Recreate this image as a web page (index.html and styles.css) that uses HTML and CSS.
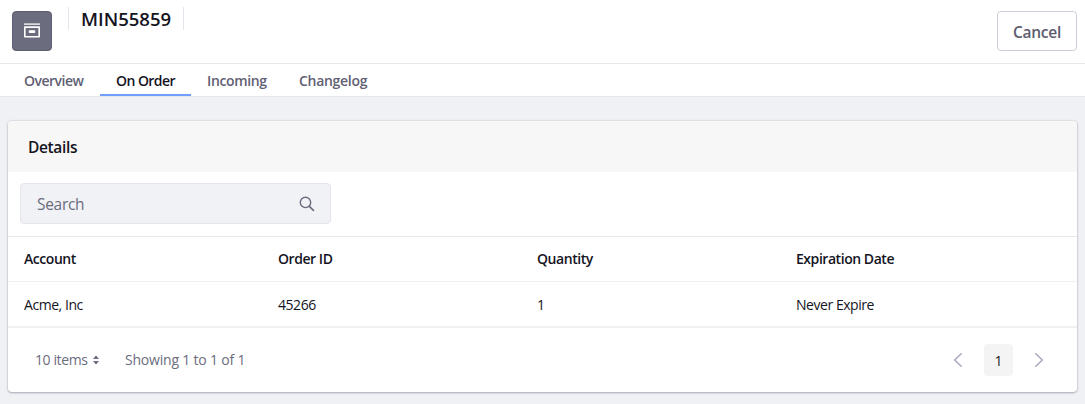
FILE: index.html
```html
<!DOCTYPE html>
<html lang="en">
<head>
<meta charset="utf-8">
<title>MIN55859</title>
<link rel="stylesheet" href="styles.css">
</head>
<body>
<header class="header">
  <div class="sticker">
    <svg width="18" height="16" viewBox="0 0 18 16"><path d="M1 1.1h16" stroke="#fff" stroke-width="1.3"/><path d="M1.8 4.1h14.4v9.7H1.8z" fill="none" stroke="#fff" stroke-width="1.6" stroke-linejoin="round"/><rect x="5.8" y="7.2" width="6.4" height="2.8" rx=".8" fill="#fff"/></svg>
  </div>
  <h1 class="title"><span>MIN55859</span></h1>
  <button class="cancel"><span>Cancel</span></button>
</header>
<nav class="tabs">
  <a class="tab tab-overview"><span>Overview</span></a>
  <a class="tab tab-order active"><span>On Order</span></a>
  <a class="tab tab-incoming"><span>Incoming</span></a>
  <a class="tab tab-changelog"><span>Changelog</span></a>
</nav>
<main class="card">
  <h2 class="card-title"><span>Details</span></h2>
  <div class="toolbar">
    <div class="search"><span>Search</span>
      <svg width="16" height="16" viewBox="0 0 16 16" fill="none" stroke="#6b6c7e" stroke-width="1.4"><circle cx="6.5" cy="6.4" r="5.2"/><path d="M10.2 10.1l4.7 4.7" stroke-width="1.7"/></svg>
    </div>
  </div>
  <div class="row row-head"><span><b>Account</b></span><span><b>Order ID</b></span><span><b>Quantity</b></span><span><b>Expiration Date</b></span></div>
  <div class="row row-body"><span>Acme, Inc</span><span>45266</span><span>1</span><span>Never Expire</span></div>
  <footer class="footer">
    <span class="page-size">10 items</span>
    <svg class="caret" width="6" height="10" viewBox="0 0 6 10" fill="#6b6c7e"><path d="M3 .6L6 4H0zM3 9.4L6 6H0z"/></svg>
    <span class="results">Showing 1 to 1 of 1</span>
    <div class="pager">
      <svg width="10" height="16" viewBox="0 0 10 16" fill="none" stroke="#a7a9bc" stroke-width="1.5"><path d="M8.7 1.2L1.7 8l7 6.8"/></svg>
      <span class="page">1</span>
      <svg width="10" height="16" viewBox="0 0 10 16" fill="none" stroke="#a7a9bc" stroke-width="1.5"><path d="M1.3 1.2l7 6.8-7 6.8"/></svg>
    </div>
  </footer>
</main>
</body>
</html>
```
FILE: styles.css
```css
* { box-sizing: border-box; }
body {
  margin: 0;
  height: 404px;
  overflow: hidden;
  background: #f0f1f5;
  color: #14141e;
  font: 14px/20px "Open Sans", "Noto Sans", sans-serif;
  white-space: nowrap;
}
.header {
  display: flex;
  align-items: flex-start;
  height: 64px;
  padding: 0 8px 0 12px;
  background: #fff;
  border-bottom: 1px solid #e7e7ed;
}
.sticker {
  display: flex;
  align-items: center;
  justify-content: center;
  width: 40px;
  height: 40px;
  margin-top: 11px;
  border: 1px solid #5d5e70;
  border-radius: 4px;
  background: #6b6c7e;
}
.title {
  width: 116px;
  height: 23px;
  margin: 7px 0 0 16px;
  padding: 0 12px;
  border: solid #e4e4ec;
  border-width: 0 1px;
  color: #14141e;
  font-size: 18.5px;
  font-weight: 550;
  line-height: 24px;
}
.cancel {
  width: 80px;
  height: 40px;
  margin: 11px 0 0 auto;
  padding: 2px 0 0;
  border: 1px solid #cdced9;
  border-radius: 4px;
  background: #fff;
  color: #5b5c70;
  font: 550 15.5px/24px "Open Sans", sans-serif;
  letter-spacing: -0.25px;
}
.tabs {
  display: flex;
  height: 33px;
  padding-left: 8px;
  background: #fff;
  border-bottom: 1px solid #e7e7ed;
}
.tab {
  padding: 7px 16px 0;
  color: #5f6073;
  font-weight: 550;
  letter-spacing: -0.35px;
  height: 32px;
}
.tab-overview { width: 92px; letter-spacing: -0.5px; }
.tab-order { width: 91px; }
.tab-incoming { width: 92px; }
.tab-changelog { letter-spacing: -0.3px; }
.active {
  color: #14141e;
  border-bottom: 2px solid #719fff;
  letter-spacing: -0.55px;
}
.card {
  height: 271px;
  margin: 24px 8px 0;
  border-radius: 4px;
  background: #fff;
  box-shadow: 0 0 2px #b9bac5, 0 1px 2px #a9aab4;
  overflow: hidden;
}
.card-title {
  height: 51px;
  margin: 0;
  padding: 14px 20px 0;
  background: #f7f7f7;
  color: #14141e;
  font-size: 15.5px;
  font-weight: 550;
  letter-spacing: -0.35px;
  line-height: 24px;
}
.toolbar {
  height: 64px;
  padding: 11px 12px 0;
}
.search {
  display: flex;
  align-items: center;
  justify-content: space-between;
  width: 311px;
  height: 41px;
  padding: 0 15px 0 16px;
  border: 1px solid #e4e4ec;
  border-radius: 4px;
  background: #f1f2f5;
  color: #6b6c7e;
  font-size: 15.5px;
  letter-spacing: -0.3px;
}
.row {
  display: grid;
  grid-template-columns: 254px 259px 259px 1fr;
  padding-left: 16px;
  border-top: 1px solid #e7e7ed;
}
.row-head { height: 45px; padding-top: 12px; }
.row-head b { font-weight: 550; letter-spacing: -0.45px; }
.row-body { height: 47px; padding-top: 13px; border-top-color: #f1f2f5; border-bottom: 2px solid #f1f1f3; letter-spacing: -0.45px; }
.footer {
  display: flex;
  align-items: center;
  height: 64px;
  padding: 0 33px 0 27px;
  color: #6b6c7e;
}
.page-size { width: 58px; letter-spacing: -0.4px; }
.results { margin-left: 26px; letter-spacing: -0.2px; }
.pager {
  display: flex;
  align-items: center;
  gap: 21px;
  margin-left: auto;
}
.page {
  width: 29px;
  height: 32px;
  border-radius: 4px;
  background: #f4f4f5;
  color: #1c1c24;
  line-height: 33px;
  text-align: center;
}
```
